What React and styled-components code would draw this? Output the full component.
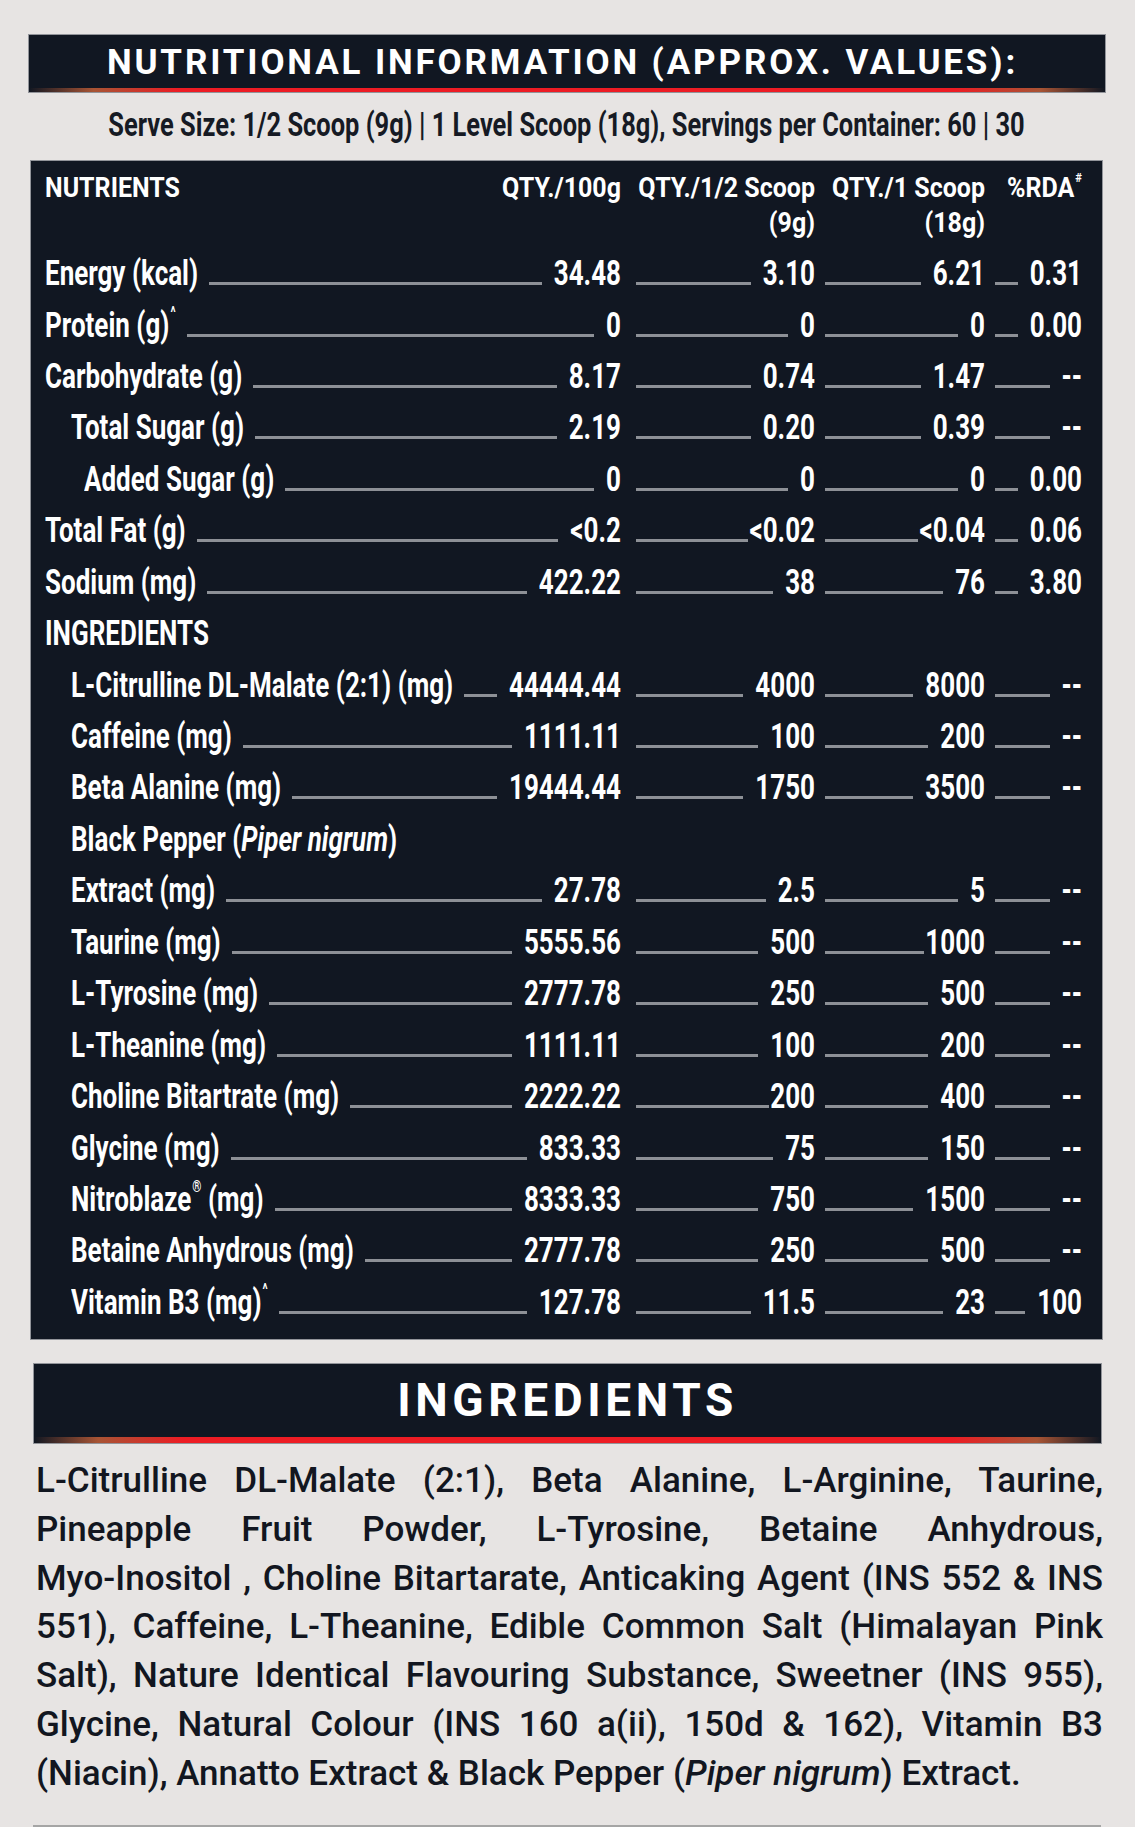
import React from 'react'
import styled, { createGlobalStyle } from 'styled-components'

const SANS = `Roboto, "Liberation Sans", sans-serif`
const NAVY = '#111722'

const rows = [
    { name: 'Energy (kcal)', v: ['34.48', '3.10', '6.21', '0.31'] },
    { name: 'Protein (g)', sup: '^', v: ['0', '0', '0', '0.00'] },
    { name: 'Carbohydrate (g)', v: ['8.17', '0.74', '1.47', '--'] },
    { name: 'Total Sugar (g)', indent: 1, v: ['2.19', '0.20', '0.39', '--'] },
    { name: 'Added Sugar (g)', indent: 2, v: ['0', '0', '0', '0.00'] },
    { name: 'Total Fat (g)', v: ['<0.2', '<0.02', '<0.04', '0.06'], tight: [false, true, true, false] },
    { name: 'Sodium (mg)', v: ['422.22', '38', '76', '3.80'] },
    { name: 'INGREDIENTS' },
    { name: 'L-Citrulline DL-Malate (2:1) (mg)', indent: 1, v: ['44444.44', '4000', '8000', '--'] },
    { name: 'Caffeine (mg)', indent: 1, v: ['1111.11', '100', '200', '--'] },
    { name: 'Beta Alanine (mg)', indent: 1, v: ['19444.44', '1750', '3500', '--'] },
    { name: 'Black Pepper (', italic: 'Piper nigrum', after: ')', indent: 1 },
    { name: 'Extract (mg)', indent: 1, v: ['27.78', '2.5', '5', '--'] },
    { name: 'Taurine (mg)', indent: 1, v: ['5555.56', '500', '1000', '--'], tight: [false, false, true, false] },
    { name: 'L-Tyrosine (mg)', indent: 1, v: ['2777.78', '250', '500', '--'] },
    { name: 'L-Theanine (mg)', indent: 1, v: ['1111.11', '100', '200', '--'] },
    { name: 'Choline Bitartrate (mg)', indent: 1, v: ['2222.22', '200', '400', '--'], tight: [false, true, false, false] },
    { name: 'Glycine (mg)', indent: 1, v: ['833.33', '75', '150', '--'] },
    { name: 'Nitroblaze', reg: true, rest: ' (mg)', indent: 1, v: ['8333.33', '750', '1500', '--'] },
    { name: 'Betaine Anhydrous (mg)', indent: 1, v: ['2777.78', '250', '500', '--'] },
    { name: 'Vitamin B3 (mg)', sup: '^', indent: 1, v: ['127.78', '11.5', '23', '100'] },
]

const ingredientLines = [
    'L-Citrulline DL-Malate (2:1), Beta Alanine, L-Arginine, Taurine,',
    'Pineapple Fruit Powder, L-Tyrosine, Betaine Anhydrous,',
    'Myo-Inositol , Choline Bitartarate, Anticaking Agent (INS 552 & INS',
    '551), Caffeine, L-Theanine, Edible Common Salt (Himalayan Pink',
    'Salt), Nature Identical Flavouring Substance, Sweetner (INS 955),',
    'Glycine,  Natural Colour (INS 160 a(ii), 150d & 162), Vitamin B3',
]

const GlobalStyle = createGlobalStyle`
    html, body {
        margin: 0;
        padding: 0;
        background: #e7e4e3;
    }
    body {
        width: 1135px;
        height: 1827px;
        overflow: hidden;
    }
`

const Page = styled.div`
    box-sizing: border-box;
    width: 1135px;
    height: 1827px;
    padding: 35px 33px 0 31px;
    display: flex;
    flex-direction: column;
`

const Banner = styled.div`
    position: relative;
    box-sizing: border-box;
    height: ${ props => props.$h }px;
    margin: ${ props => props.$margin };
    background: ${ NAVY };
    box-shadow: 0 0 0 1px rgba(90, 95, 105, 0.6);
    display: flex;
    align-items: center;
    justify-content: center;
    padding-bottom: ${ props => props.$pb || 0 }px;

    &::after {
        content: '';
        position: absolute;
        left: 0;
        right: 0;
        bottom: 0;
        height: ${ props => props.$line }px;
        background: linear-gradient(90deg,
            rgba(237, 28, 36, 0) 0%,
            rgba(232, 110, 60, 0.7) 6%,
            #ed1c24 14%,
            #ed1c24 86%,
            rgba(232, 110, 60, 0.7) 94%,
            rgba(237, 28, 36, 0) 100%);
    }
`

const BannerTitle = styled.h1`
    margin: 0;
    padding-right: ${ props => props.$shift || 0 }px;
    font-family: ${ SANS };
    font-weight: 700;
    font-size: ${ props => props.$size }px;
    line-height: 1;
    letter-spacing: ${ props => props.$spacing }px;
    color: #fff;
`

// condensed-looking label: small Roboto Bold stretched upward
const Txt = styled.span`
    display: inline-block;
    font-family: ${ SANS };
    font-weight: 700;
    font-size: ${ props => props.$size || 26 }px;
    line-height: 1;
    white-space: nowrap;
    transform: scaleY(${ props => props.$sy || 1.35 });
    transform-origin: 50% 84%;

    em {
        font-style: italic;
    }

    sup {
        font-size: 0.45em;
        vertical-align: 1.2em;
        line-height: 0;
        margin-left: 1px;
    }
`

const ServeLine = styled.div`
    height: 69px;
    box-sizing: border-box;
    padding-top: 3px;
    display: flex;
    align-items: center;
    justify-content: center;
    color: #161a24;
`

const Panel = styled.section`
    background: ${ NAVY };
    box-shadow: 0 0 0 1px rgba(90, 95, 105, 0.6);
    padding: 7.5px 20px 10px 14px;
    color: #fff;
`

const Grid = styled.div`
    display: grid;
    grid-template-columns: 576px 194px 170px 97px;
`

const HeadRow = styled(Grid)`
    box-sizing: border-box;
    height: 80px;
    padding-top: 2.5px;
    font-family: ${ SANS };
    font-size: 25px;
    line-height: 35px;
`

const HeadCell = styled.div`
    display: flex;
    flex-direction: ${ props => props.$split ? 'row' : 'column' };
    justify-content: ${ props => props.$split ? 'space-between' : 'flex-start' };
    align-items: ${ props => props.$split ? 'flex-start' : 'flex-end' };
    padding-left: ${ props => props.$pad || 0 }px;
`

const HeadLine = styled.div`
    height: 35px;
`

const Row = styled(Grid)`
    box-sizing: border-box;
    height: 51.45px;
    padding-top: 14.6px;
`

const Cell = styled.div`
    display: flex;
    align-items: baseline;
    padding-left: ${ props => props.$pad || 0 }px;
    min-width: 0;
`

const Leader = styled.i`
    flex: 1;
    min-width: 0;
    height: 3px;
    background: #8d9096;
    margin-left: ${ props => props.$ml || 0 }px;
    margin-right: ${ props => props.$tight ? 1 : 12 }px;
`

const Paragraph = styled.div`
    margin: 14px -1px 0 5px;
    font-family: ${ SANS };
    font-weight: 500;
    font-size: 35px;
    line-height: 48.9px;
    color: #121620;
`

const Line = styled.div`
    text-align: ${ props => props.$last ? 'left' : 'justify' };
    text-align-last: ${ props => props.$last ? 'left' : 'justify' };
`

const Rule = styled.div`
    margin: auto 1px 0 2px;
    height: 2px;
    background: #a5a5a5;
`

const indents = [0, 26, 39]
const pads = [0, 15, 10, 10]

const HeadText = ({ children }) => (
    <HeadLine><Txt $size={ 25 } $sy={ 1.13 }>{ children }</Txt></HeadLine>
)

const NameText = ({ row }) => (
    <Txt style={{ marginLeft: indents[row.indent || 0] }}>
        { row.name }
        { row.italic && <em>{ row.italic }</em> }
        { row.after }
        { row.reg && <sup>®</sup> }
        { row.rest }
        { row.sup && <sup>{ row.sup }</sup> }
    </Txt>
)

const NutrientRow = ({ row }) => {
    if (!row.v) {
        return (
            <Row>
                <Cell><NameText row={ row } /></Cell>
            </Row>
        )
    }
    const tight = row.tight || []
    return (
        <Row>
            <Cell>
                <NameText row={ row } />
                <Leader $ml={ 11 } $tight={ tight[0] } />
                <Txt>{ row.v[0] }</Txt>
            </Cell>
            { row.v.slice(1).map((value, i) => (
                <Cell key={ i } $pad={ pads[i + 1] }>
                    <Leader $tight={ tight[i + 1] } />
                    <Txt>{ value }</Txt>
                </Cell>
            )) }
        </Row>
    )
}

export default function App() {
    return (
        <Page>
            <GlobalStyle />
            <Banner $h={ 57 } $margin="0 -3px 0 -2px" $line={ 4 } $pb={ 2 }>
                <BannerTitle $size={ 35 } $spacing={ 2.85 } $shift={ 9 }>NUTRITIONAL INFORMATION (APPROX. VALUES):</BannerTitle>
            </Banner>

            <ServeLine>
                <Txt $size={ 25.45 } $sy={ 1.32 }>
                    Serve Size: 1/2 Scoop (9g) | 1 Level Scoop (18g), Servings per Container: 60 | 30
                </Txt>
            </ServeLine>

            <Panel>
                <HeadRow>
                    <HeadCell $split>
                        <HeadText>NUTRIENTS</HeadText>
                        <HeadText>QTY./100g</HeadText>
                    </HeadCell>
                    <HeadCell $pad={ 15 }>
                        <HeadText>QTY./1/2 Scoop</HeadText>
                        <HeadText>(9g)</HeadText>
                    </HeadCell>
                    <HeadCell $pad={ 10 }>
                        <HeadText>QTY./1 Scoop</HeadText>
                        <HeadText>(18g)</HeadText>
                    </HeadCell>
                    <HeadCell $pad={ 10 }>
                        <HeadText>%RDA<sup>#</sup></HeadText>
                    </HeadCell>
                </HeadRow>
                { rows.map((row, i) => <NutrientRow key={ i } row={ row } />) }
            </Panel>

            <Banner $h={ 79 } $margin="25px 1px 0 3px" $line={ 6 } $pb={ 6 }>
                <BannerTitle $size={ 46 } $spacing={ 4.6 }>INGREDIENTS</BannerTitle>
            </Banner>

            <Paragraph>
                { ingredientLines.map((text, i) => <Line key={ i }>{ text }</Line>) }
                <Line $last>(Niacin), Annatto Extract &amp; Black Pepper (<em>Piper nigrum</em>) Extract.</Line>
            </Paragraph>

            <Rule />
        </Page>
    )
}
